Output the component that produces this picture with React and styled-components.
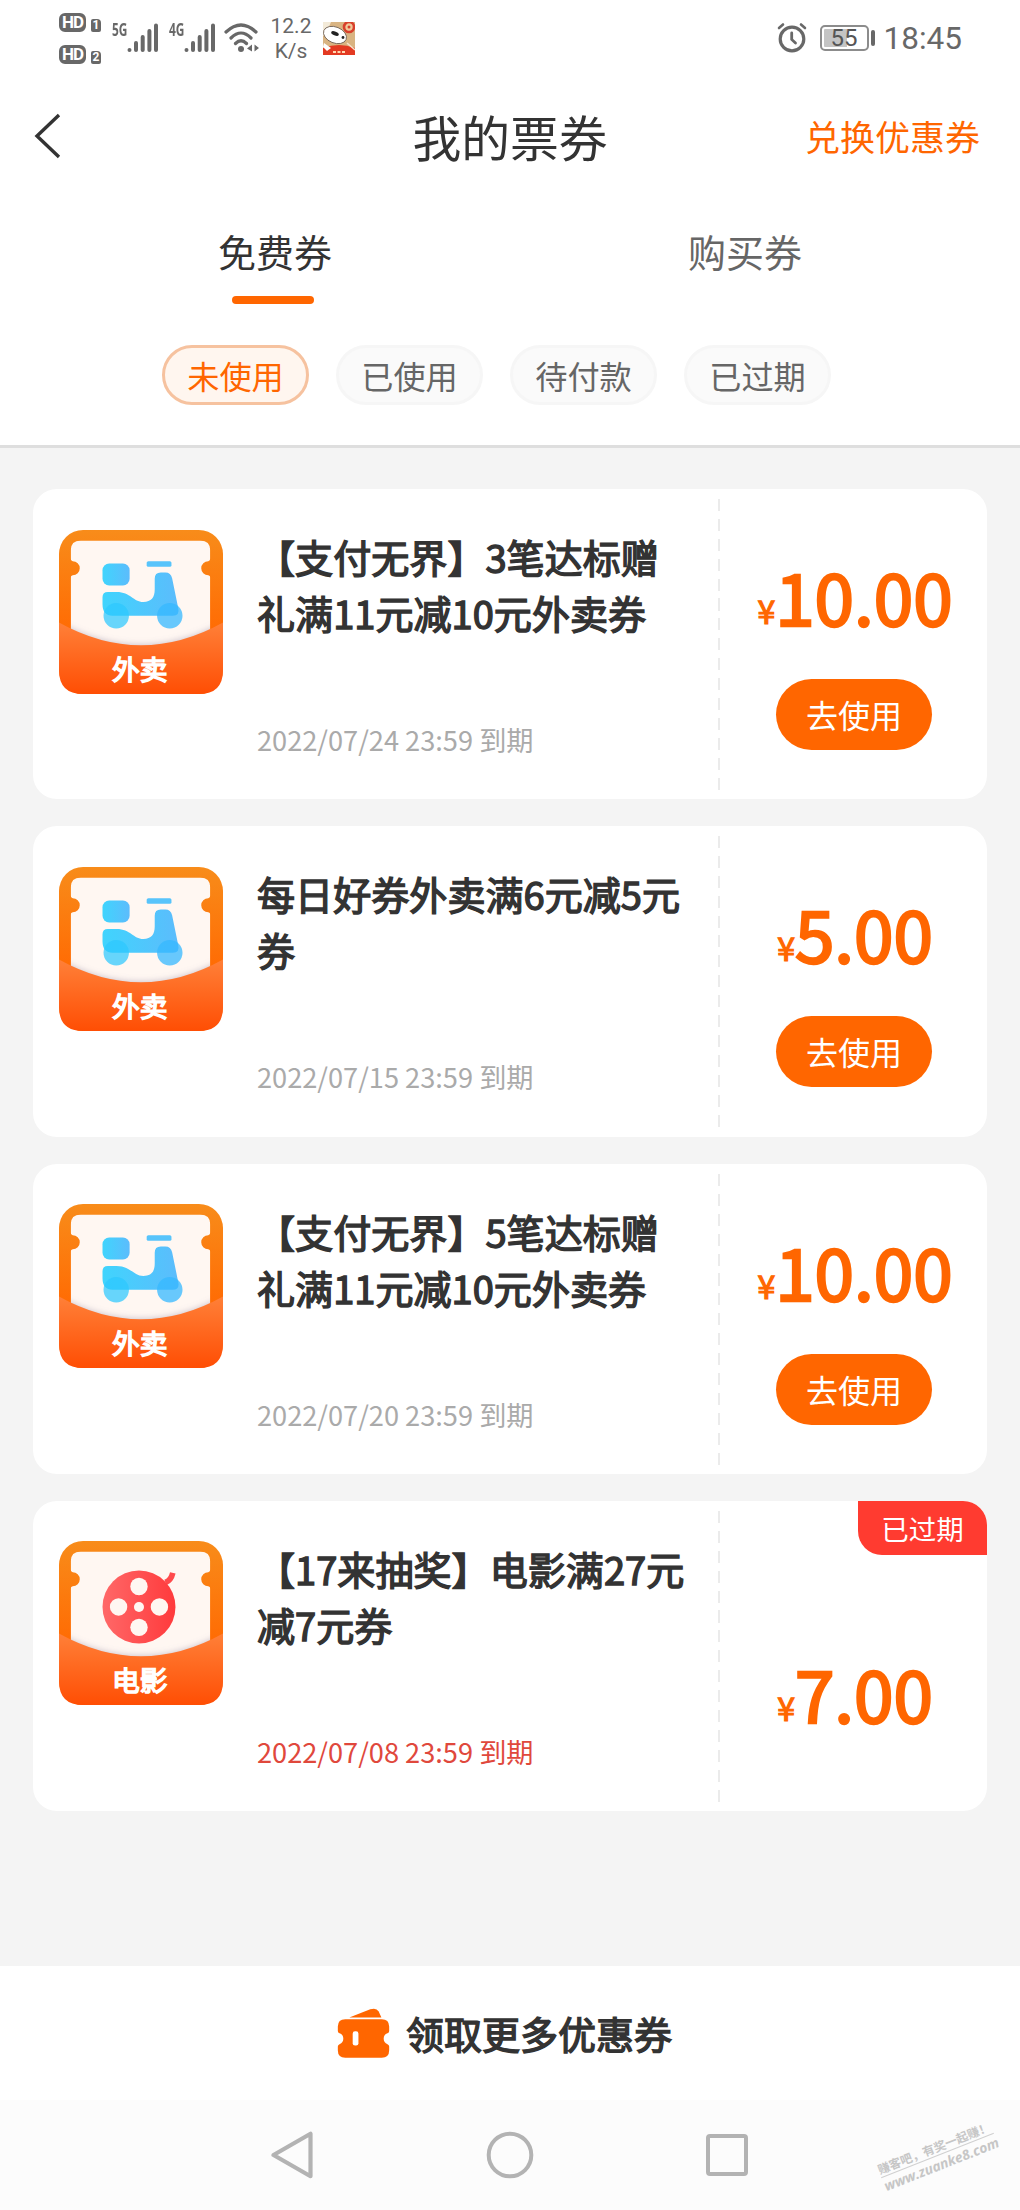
import React, { useState } from 'react';
import styled, { createGlobalStyle } from 'styled-components';

const GlobalStyle = createGlobalStyle`
  * {
    box-sizing: border-box;
  }
  body {
    margin: 0;
    background: #fff;
    font-family: "Noto Sans CJK SC", sans-serif;
    color: #333;
  }
  button {
    font-family: inherit;
    border: none;
    padding: 0;
    margin: 0;
    background: none;
  }
`;

const Page = styled.div`
  width: 1020px;
  height: 2210px;
  display: flex;
  flex-direction: column;
  overflow: hidden;
`;

/* status bar */

const StatusBar = styled.div`
  height: 80px;
  display: flex;
  justify-content: space-between;
  padding: 0 58px 0 59px;
  color: #686868;
  font-family: Roboto, sans-serif;
`;

const StatusGroup = styled.div`
  display: flex;
  align-items: flex-start;
`;

const HdList = styled.div`
  display: flex;
  flex-direction: column;
  gap: 13px;
  padding-top: 13px;
  width: 53px;
`;

const HdRow = styled.div`
  display: flex;
  align-items: flex-end;
  gap: 5px;
  height: 19px;
`;

const HdBadge = styled.span`
  width: 27px;
  height: 19px;
  border: 2.5px solid #686868;
  border-radius: 6px;
  background: #686868;
  color: #fff;
  font-size: 17px;
  font-weight: 700;
  line-height: 15px;
  text-align: center;
  letter-spacing: -1px;
`;

const SimBadge = styled.span`
  width: 10px;
  height: 13px;
  border-radius: 2px 4px 2px 2px;
  background: #686868;
  color: #fff;
  font-size: 12px;
  font-weight: 700;
  line-height: 13px;
  text-align: center;
`;

const NetLabel = styled.span`
  width: 15px;
  margin-top: 22px;
  font: 700 17px/16px "Open Sans", sans-serif;
  span {
    display: inline-block;
    transform: scaleX(0.7);
    transform-origin: 0 50%;
  }
`;

const SignalIcon = styled.svg`
  width: 32px;
  height: 30px;
  margin-top: 23px;
  margin-right: ${(props) => props.$gap || 0}px;
`;

const WifiIcon = styled.svg`
  width: 36px;
  height: 30px;
  margin-top: 23px;
`;

const Speed = styled.div`
  width: 48px;
  margin-left: 7px;
  padding-top: 14px;
  font-size: 21px;
  line-height: 25px;
  text-align: center;
`;

const AppBadge = styled.svg`
  width: 32px;
  height: 33px;
  margin: 22px 0 0 8px;
`;

const AlarmIcon = styled.svg`
  width: 30px;
  height: 31px;
  margin-top: 22px;
`;

const Battery = styled.div`
  width: 49px;
  height: 26px;
  margin: 25px 0 0 13px;
  padding: 2px;
  border: 2px solid #8c8c8c;
  border-radius: 5px;
  background: linear-gradient(90deg, #c4c4c4 55%, #fff 55%) content-box;
  font-size: 24px;
  line-height: 19px;
  text-align: center;
  color: #555;
`;

const BatteryCap = styled.div`
  width: 4px;
  height: 16px;
  margin: 30px 0 0 2px;
  border-radius: 2px;
  background: #686868;
`;

const Clock = styled.div`
  margin: 19px 0 0 9px;
  font-size: 31.5px;
  line-height: 40px;
`;

/* title bar */

const TitleBar = styled.header`
  height: 115px;
  display: grid;
  grid-template-columns: 1fr auto 1fr;
  align-items: center;
  padding: 0 40px 4px 33px;
`;

const BackButton = styled.button`
  width: 30px;
  height: 48px;
  svg {
    display: block;
  }
`;

const PageTitle = styled.h1`
  margin: 0;
  padding-left: 7px;
  font-size: 48.8px;
  font-weight: 400;
  line-height: 60px;
`;

const RedeemLink = styled.button`
  justify-self: end;
  font-size: 35px;
  line-height: 50px;
  color: #ff6600;
`;

/* tabs */

const Tabs = styled.nav`
  height: 109px;
  display: flex;
  padding: 29px 40px 0;
`;

const Tab = styled.button`
  flex: 1;
  display: flex;
  flex-direction: column;
  align-items: center;
  font-size: 38px;
  line-height: 54px;
  color: ${(props) => (props.$active ? '#333' : '#666')};
  &::after {
    content: "";
    width: 82px;
    height: 8px;
    margin: 18px 4px 0 0;
    border-radius: 4px;
    background: ${(props) => (props.$active ? '#ff6600' : 'transparent')};
  }
`;

const Filters = styled.div`
  height: 144px;
  display: flex;
  align-items: flex-start;
  gap: 27px;
  padding: 41px 0 0 162px;
  border-bottom: 3px solid #dedede;
`;

const Pill = styled.button`
  width: 147px;
  height: 60px;
  border: 3px solid ${(props) => (props.$active ? '#f6c29f' : '#f6f6f6')};
  border-radius: 30px;
  background: ${(props) => (props.$active ? '#fff6ef' : '#fafafa')};
  color: ${(props) => (props.$active ? '#ff6600' : '#666')};
  font-size: 32.2px;
  line-height: 53px;
`;

/* coupon list */

const CouponList = styled.main`
  flex: 1;
  display: flex;
  flex-direction: column;
  gap: 27px;
  padding: 41px 33px 0;
  background: #f4f4f4;
`;

const Card = styled.section`
  position: relative;
  height: 310.3px;
  display: flex;
  border-radius: 24px;
  background: #fff;
`;

const CouponIcon = styled.svg`
  flex: none;
  width: 164px;
  height: 164px;
  margin: 40.500px 0 0 26px;
`;

const Info = styled.div`
  width: 431px;
  margin-left: 34px;
  padding-top: 40px;
`;

const CouponTitle = styled.h2`
  height: 112px;
  margin: 0 0 78px;
  font-size: 38.1px;
  font-weight: 400;
  line-height: 56px;
  -webkit-text-stroke: 1.4px #333;
`;

const Expiry = styled.p`
  margin: 0;
  font-size: 27.2px;
  line-height: 40px;
  color: ${(props) => (props.$expired ? '#e0483c' : '#aaa')};
`;

const Divider = styled.div`
  width: 2px;
  height: 291px;
  margin: 10px 0 0 30px;
  background: repeating-linear-gradient(#ebebeb 0 12px, transparent 12px 19.9px);
`;

const Action = styled.div`
  flex: 1;
  display: flex;
  flex-direction: column;
  align-items: center;
  padding-top: ${(props) => (props.$expired ? 146 : 61)}px;
  padding-left: 1px;
`;

const Price = styled.div`
  display: flex;
  align-items: baseline;
  height: 90px;
  padding-left: 2px;
  line-height: 90px;
  font-size: 71px;
  color: #ff6600;
  -webkit-text-stroke: 2.5px #ff6600;
`;

const Yen = styled.span`
  padding-bottom: 2px;
  margin-bottom: 2px;
  font-size: 32px;
  -webkit-text-stroke: 1.2px #ff6600;
  transform: translateY(-2px);
`;

const UseButton = styled.button`
  width: 156px;
  height: 71px;
  margin-top: 39px;
  border-radius: 36px;
  background: #ff6600;
  color: #fff;
  font-size: 32px;
  line-height: 71px;
`;

const ExpiredTag = styled.span`
  position: absolute;
  top: 0;
  right: 0;
  width: 129px;
  height: 54px;
  border-radius: 0 24px 0 24px;
  background: #ff3b30;
  color: #fff;
  font-size: 27.5px;
  line-height: 54px;
  text-align: center;
`;

/* bottom */

const MoreBar = styled.button`
  height: 134px;
  display: flex;
  align-items: center;
  justify-content: center;
  gap: 16px;
  padding-right: 11px;
  background: #fff;
  color: #333;
  font-size: 38px;
  line-height: 56px;
  -webkit-text-stroke: 1.4px #333;
`;

const SystemNav = styled.footer`
  position: relative;
  height: 110px;
  display: flex;
  justify-content: center;
  align-items: center;
  gap: 169px;
  background: #fcfcfc;
`;

const Watermark = styled.div`
  position: absolute;
  left: 877px;
  top: 38px;
  width: 121px;
  transform: rotate(-21.5deg);
  color: #c6c6c6;
  font-size: 12px;
  font-weight: 700;
  line-height: 17px;
  white-space: nowrap;
`;

const WatermarkUrl = styled.div`
  border-top: 1px solid #d0d0d0;
  font: italic 700 13.8px/17px "Open Sans", sans-serif;
`;

const coupons = [
  { id: 1, type: 'takeout', title: '【支付无界】3笔达标赠礼满11元减10元外卖券', date: '2022/07/24 23:59', price: '10.00' },
  { id: 2, type: 'takeout', title: '每日好券外卖满6元减5元券', date: '2022/07/15 23:59', price: '5.00' },
  { id: 3, type: 'takeout', title: '【支付无界】5笔达标赠礼满11元减10元外卖券', date: '2022/07/20 23:59', price: '10.00' },
  { id: 4, type: 'movie', title: '【17来抽奖】电影满27元减7元券', date: '2022/07/08 23:59', price: '7.00', expired: true },
];

function Signal({ gap }) {
  return (
    <SignalIcon $gap={gap} viewBox="0 0 32 30" stroke="#686868" strokeWidth="4" strokeLinecap="round">
      <path d="M2.500 27V26.900M9 27V20M15.700 27V14M22.400 27V8M29 27V2.500" />
    </SignalIcon>
  );
}

function Scooter() {
  return (
    <g>
      <rect x="130" y="100" width="81" height="66" rx="20" fill="url(#blue)" />
      <rect x="262" y="93" width="74" height="17" rx="5" fill="#58c4fb" />
      <path
        d="M130 201Q130 185 146 185H172C214 185 222 215 252 215C276 215 286 202 286 178V146Q286 127 304 127H318Q334 127 338 144L356 232Q362 256 340 256H160Q130 256 130 222Z"
        fill="url(#blue)"
      />
      <circle cx="171" cy="256" r="38" fill="#2cc8fd" fillOpacity="0.72" />
      <circle cx="331" cy="256" r="38" fill="#35b8ff" fillOpacity="0.75" />
    </g>
  );
}

function FilmReel() {
  return (
    <g>
      <path d="M318 124Q335 117 340 95" fill="none" stroke="#ff4a4c" strokeWidth="17" />
      <circle cx="239" cy="197" r="109" fill="url(#red)" />
      <g fill="#fff7f2">
        <circle cx="239" cy="136" r="26" />
        <circle cx="178" cy="197" r="26" />
        <circle cx="300" cy="197" r="26" />
        <circle cx="239" cy="258" r="26" />
        <circle cx="239" cy="197" r="15" />
      </g>
    </g>
  );
}

function TypeIcon({ type }) {
  return (
    <CouponIcon viewBox="0 0 490 490">
      <defs>
        <linearGradient id="frame" x2="0" y2="1">
          <stop offset="0" stopColor="#f88c1a" />
          <stop offset="0.600" stopColor="#ff6c04" />
        </linearGradient>
        <linearGradient id="pocket" x2="0" y2="1">
          <stop offset="0" stopColor="#ff8038" />
          <stop offset="1" stopColor="#ff4e04" />
        </linearGradient>
        <linearGradient id="blue">
          <stop offset="0" stopColor="#40d4fd" />
          <stop offset="1" stopColor="#5cbcfc" />
        </linearGradient>
        <linearGradient id="red">
          <stop offset="0" stopColor="#ff6868" />
          <stop offset="1" stopColor="#ff3a3c" />
        </linearGradient>
        <filter id="soft">
          <feGaussianBlur stdDeviation="10" />
        </filter>
        <clipPath id="ticket">
          <path d="M65 31H422Q452 31 452 61V85Q452 92 446 93A21 21 0 0 0 446 135Q452 136 452 143V400H35V143Q35 136 41 135A21 21 0 0 0 41 93Q35 92 35 85V61Q35 31 65 31Z" />
        </clipPath>
      </defs>
      <rect width="490" height="490" rx="72" fill="url(#frame)" />
      <g clipPath="url(#ticket)">
        <rect width="490" height="490" fill="#fff7f2" />
        {type === 'movie' ? <FilmReel /> : <Scooter />}
        <path d="M0 276Q245 410 490 276V400H0Z" fill="#8a7f98" fillOpacity="0.450" filter="url(#soft)" />
      </g>
      <path d="M0 276Q245 412 490 276V418Q490 490 418 490H72Q0 490 0 418Z" fill="url(#pocket)" />
      <text x="241" y="449" textAnchor="middle" fontSize="83" fill="#fff" stroke="#fff" strokeWidth="4.500">
        {type === 'movie' ? '电影' : '外卖'}
      </text>
    </CouponIcon>
  );
}

function Coupon({ item }) {
  return (
    <Card>
      <TypeIcon type={item.type} />
      <Info>
        <CouponTitle>{item.title}</CouponTitle>
        <Expiry $expired={item.expired}>{item.date} 到期</Expiry>
      </Info>
      <Divider />
      <Action $expired={item.expired}>
        <Price>
          <Yen>¥</Yen>
          {item.price}
        </Price>
        {!item.expired && <UseButton>去使用</UseButton>}
      </Action>
      {item.expired && <ExpiredTag>已过期</ExpiredTag>}
    </Card>
  );
}

function App() {
  const [tab, setTab] = useState('免费券');
  const [filter, setFilter] = useState('未使用');

  return (
    <Page>
      <GlobalStyle />
      <StatusBar>
        <StatusGroup>
          <HdList>
            <HdRow><HdBadge>HD</HdBadge><SimBadge>1</SimBadge></HdRow>
            <HdRow><HdBadge>HD</HdBadge><SimBadge>2</SimBadge></HdRow>
          </HdList>
          <NetLabel><span>5G</span></NetLabel>
          <Signal gap={10} />
          <NetLabel><span>4G</span></NetLabel>
          <Signal gap={8} />
          <WifiIcon viewBox="0 0 36 30" fill="none" stroke="#686868" strokeWidth="3.2" strokeLinecap="round">
            <path d="M2 9Q17 -5 32 9M7 15Q17 5 27 15M11.500 20.500Q17 15 22.500 20.500" />
            <circle cx="17" cy="26" r="3" fill="#686868" stroke="none" />
            <path d="M28 21.500V28.500L23 25.500ZM30.500 21.500L35 25L30.500 28.500Z" fill="#686868" stroke="none" />
          </WifiIcon>
          <Speed>12.2<br />K/s</Speed>
          {/* notification from the shopping app */}
          <AppBadge viewBox="0 0 32 33">
            <rect width="32" height="33" fill="#d9b482" />
            <path d="M0 0H8L3 12L0 14Z" fill="#f3ead8" />
            <circle cx="26" cy="5" r="5" fill="#f0c99a" stroke="#d8402c" strokeWidth="2.600" />
            <circle cx="26" cy="5" r="1.500" fill="#d8402c" />
            <path d="M0 26Q16 20 32 26V33H0Z" fill="#e33a22" />
            <ellipse cx="12" cy="13" rx="12" ry="8" transform="rotate(22 12 13)" fill="#fff" stroke="#6b5a4c" strokeWidth="0.800" />
            <path d="M1 21L8 26L4 29L0 25Z" fill="#fff" />
            <ellipse cx="12" cy="11.500" rx="4" ry="2" transform="rotate(22 12 11.500)" fill="#222" />
            <circle cx="20" cy="15.500" r="1.400" fill="#222" />
            <path d="M10 30H22" stroke="#ffd9b0" strokeWidth="2" strokeDasharray="3 1.500" />
            <path d="M24 21L32 28" stroke="#f5e2cc" strokeWidth="1.500" />
          </AppBadge>
        </StatusGroup>
        <StatusGroup>
          <AlarmIcon viewBox="0 0 30 31" fill="none" stroke="#686868" strokeWidth="3.200" strokeLinecap="round">
            <circle cx="15" cy="17" r="11.800" />
            <path d="M14.700 11V17.500L18.500 21" strokeWidth="2.800" />
            <path d="M2 6L6 2.500M28 6L24 2.500" strokeWidth="2.600" />
          </AlarmIcon>
          <Battery>55</Battery>
          <BatteryCap />
          <Clock>18:45</Clock>
        </StatusGroup>
      </StatusBar>

      <TitleBar>
        <BackButton>
          <svg width="30" height="48" viewBox="0 0 30 48" fill="none" stroke="#333" strokeWidth="3.400">
            <path d="M26 3L4 24L26 45" />
          </svg>
        </BackButton>
        <PageTitle>我的票券</PageTitle>
        <RedeemLink>兑换优惠券</RedeemLink>
      </TitleBar>

      <Tabs>
        {['免费券', '购买券'].map((name) => (
          <Tab key={name} $active={name === tab} onClick={() => setTab(name)}>{name}</Tab>
        ))}
      </Tabs>
      <Filters>
        {['未使用', '已使用', '待付款', '已过期'].map((name) => (
          <Pill key={name} $active={name === filter} onClick={() => setFilter(name)}>{name}</Pill>
        ))}
      </Filters>

      <CouponList>
        {coupons.map((item) => (
          <Coupon key={item.id} item={item} />
        ))}
      </CouponList>

      <MoreBar>
        <svg width="53" height="50" viewBox="0 0 156 148" fill="#ff6600">
          <path d="M36 28L98 4Q116 -2 123 10L131 28Z" />
          <path d="M24 33H132Q154 33 154 55V68Q154 73 149 75A17 17 0 0 0 149 107Q154 109 154 114V125Q154 147 132 147H24Q2 147 2 125V114Q2 109 7 107A17 17 0 0 0 7 75Q2 73 2 68V55Q2 33 24 33Z" />
          <rect x="46" y="69" width="17" height="42" rx="7" fill="#fff" />
        </svg>
        领取更多优惠券
      </MoreBar>

      <SystemNav>
        <svg width="48" height="48" viewBox="0 0 48 48" fill="none" stroke="#b3b3b3" strokeWidth="4.200" strokeLinejoin="round">
          <path d="M41.500 2.800V45.200L4.500 24Z" />
        </svg>
        <svg width="48" height="48" viewBox="0 0 48 48" fill="none" stroke="#b3b3b3" strokeWidth="4">
          <circle cx="24" cy="24" r="21.300" />
        </svg>
        <svg width="48" height="48" viewBox="0 0 48 48" fill="none" stroke="#b3b3b3" strokeWidth="4">
          <rect x="5" y="5" width="38" height="38" rx="2" />
        </svg>
        <Watermark>
          赚客吧，有奖一起赚！
          <WatermarkUrl>www.zuanke8.com</WatermarkUrl>
        </Watermark>
      </SystemNav>
    </Page>
  );
}

export default App;
